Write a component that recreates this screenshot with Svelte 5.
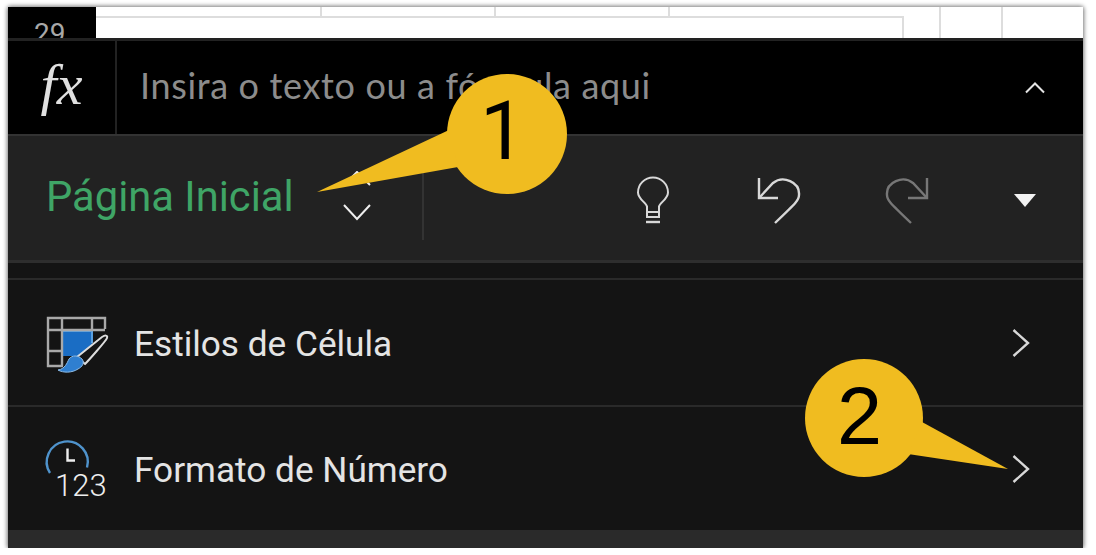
<script lang="ts">
	const topCols = [226, 174, 174];
	const rows = [
		{ label: "Estilos de Célula", icon: "styles" },
		{ label: "Formato de Número", icon: "number" }
	];
</script>

<div class="frame">
	<div class="sheet">
		<div class="row-head"><span>29</span></div>
		<div class="grid-main">
			<div class="grid-top">
				{#each topCols as w}
					<div class="cell" style="width: {w}px"></div>
				{/each}
			</div>
			<div class="grid-box"></div>
		</div>
		<div class="col col-a"></div>
		<div class="col col-b"></div>
	</div>

	<div class="formula">
		<div class="fx">fx</div>
		<div class="placeholder">Insira o texto ou a fórmula aqui</div>
		<svg class="collapse" width="22" height="13" viewBox="0 0 22 13">
			<path d="M2 11.5 11 2.5 20 11.5" fill="none" stroke="#e4e4e4" stroke-width="2" />
		</svg>
	</div>

	<div class="ribbon">
		<div class="tab">Página Inicial</div>
		<svg class="updown" width="28" height="50" viewBox="0 0 28 50">
			<path d="M1 14 14 1 27 14" fill="none" stroke="#eee" stroke-width="2" />
			<path d="M1 34 14 48 27 34" fill="none" stroke="#eee" stroke-width="2" />
		</svg>
		<div class="divider"></div>
		<svg class="bulb" width="34" height="48" viewBox="0 0 34 48">
			<path d="M11 41V30.5C10 26.5 2 23 2 16.5A15 15 0 0 1 32 16.5C32 23 24 26.5 23 30.5V41ZM11 36H23" fill="none" stroke="#d8d8d8" stroke-width="2" />
			<path d="M10 46H24" fill="none" stroke="#d8d8d8" stroke-width="2.4" />
		</svg>
		<svg class="undo" width="46" height="48" viewBox="0 0 46 48">
			<path d="M3 2V22H22" fill="none" stroke="#d8d8d8" stroke-width="2.4" />
			<path d="M3 22 17 7C27 -1 44 6 43 19C43 24 41 26 19 47" fill="none" stroke="#d8d8d8" stroke-width="2.4" />
		</svg>
		<svg class="redo" width="46" height="48" viewBox="0 0 46 48">
			<path d="M43 2V22H24" fill="none" stroke="#777" stroke-width="2.4" />
			<path d="M43 22 29 7C19 -1 2 6 3 19C3 24 5 26 27 47" fill="none" stroke="#777" stroke-width="2.4" />
		</svg>
		<svg class="caret" width="22" height="13" viewBox="0 0 22 13">
			<path d="M0 0H22L11 13Z" fill="#f2f2f2" />
		</svg>
	</div>

	<div class="strip"></div>

	{#each rows as row}
		<div class="row">
			{#if row.icon === "styles"}
				<svg class="row-icon" width="62" height="58" viewBox="0 0 62 58">
					<path d="M15 14H45V39H15Z" fill="#1a6dc4" />
					<path d="M15 39V14H45V26" fill="none" stroke="#5aa0e0" stroke-width="2" />
					<path d="M16 49H1V1H58V12M1 13H58M1 34H15M15 1V49M45 1V13" fill="none" stroke="#a9a9a9" stroke-width="2.4" />
					<path d="M30 40 55 20C58 18 61 18 60 21 59 24 41 44 38 47Z" fill="#141414" stroke="#ddd" stroke-width="2" />
					<path d="M11 53C18 52 20 46 22 42 25 38 31 38 35 42 38 46 35 50 31 52 25 56 16 56 11 53Z" fill="#2f7fd0" stroke="#8dbbe6" stroke-width="1" />
				</svg>
			{:else}
				<svg class="row-icon" width="62" height="58" viewBox="0 0 62 58">
					<path d="M3 30A20.5 20.5 0 1 1 40 24.5" fill="none" stroke="#4f93cc" stroke-width="2.4" />
					<path d="M20.5 5.5V17.5H28" fill="none" stroke="#eee" stroke-width="2.4" />
					<text class="digits" x="8" y="52.5">123</text>
				</svg>
			{/if}
			<span class="label">{row.label}</span>
			<svg class="arrow" width="18" height="28" viewBox="0 0 18 28">
				<path d="M1.5 1 16 14 1.5 27" fill="none" stroke="#d8d8d8" stroke-width="2.4" />
			</svg>
		</div>
	{/each}

	<div class="bottom"></div>

	<svg class="callouts" width="1096" height="555" viewBox="0 0 1096 555">
		<circle cx="507" cy="134" r="60" fill="#f0bc20" />
		<path d="M317 192 449 130 458 167Z" fill="#f0bc20" />
		<circle cx="864" cy="418" r="59" fill="#f0bc20" />
		<path d="M1008 469 922 422 908 454Z" fill="#f0bc20" />
	</svg>
	<div class="badge one">1</div>
	<div class="badge two">2</div>
</div>

<style>
	:global(body) {
		background: #fff;
	}

	* {
		box-sizing: border-box;
	}

	.frame {
		position: relative;
		width: 1075px;
		height: 541px;
		margin: 7px 0 0 8px;
		display: flex;
		flex-direction: column;
		background: #141414;
		box-shadow: 0 0 4px 1px #777;
		border-radius: 3px;
		font-family: Roboto, sans-serif;
	}

	.sheet {
		height: 31px;
		display: flex;
		background: #fff;
		overflow: hidden;
	}

	.row-head {
		width: 88px;
		background: #000;
		color: #a8a8a8;
		font-size: 28px;
		padding: 11px 0 0 26px;
	}

	.row-head span {
		display: block;
		line-height: 32px;
	}

	.grid-main {
		width: 808px;
	}

	.grid-top {
		height: 9px;
		display: flex;
	}

	.cell {
		border-right: 2px solid #ddd;
	}

	.grid-box {
		height: 22px;
		border-top: 2px solid #ddd;
		border-right: 2px solid #ddd;
	}

	.col {
		border-right: 2px solid #ddd;
	}

	.col-a {
		width: 37px;
	}

	.col-b {
		width: 62px;
	}

	.formula {
		height: 96px;
		display: flex;
		align-items: center;
		background: #000;
		border-top: 3px solid #222;
	}

	.fx {
		width: 109px;
		height: 100%;
		border-right: 2px solid #222;
		color: #e0e0e0;
		font-family: "Liberation Serif", serif;
		font-style: italic;
		font-size: 58px;
		line-height: 87px;
		text-align: center;
	}

	.placeholder {
		margin-left: 23px;
		padding-bottom: 6px;
		font-family: Lato, sans-serif;
		font-size: 36px;
		letter-spacing: 0.65px;
		color: #8c8c8c;
		flex: 1;
	}

	.collapse {
		margin-right: 37px;
	}

	.ribbon {
		height: 126px;
		display: flex;
		align-items: center;
		background: #222;
		border-top: 2px solid #333;
	}

	.tab {
		margin: -4px 0 0 38px;
		width: 297px;
		font-size: 41.7px;
		color: #3fa566;
	}

	.updown {
		margin-top: -4px;
	}

	.divider {
		width: 2px;
		height: 76px;
		margin: 8px 0 0 51px;
		background: #333;
	}

	.bulb {
		margin: 4px 0 0 212px;
	}

	.undo {
		margin: 4px 0 0 86px;
	}

	.redo {
		margin: 4px 0 0 82px;
	}

	.caret {
		margin: 4px 0 0 84px;
	}

	.strip {
		height: 20px;
		background: #141414;
		border-top: 3px solid #2e2e2e;
		border-bottom: 2px solid #2a2a2a;
	}

	.row {
		height: 125px;
		display: flex;
		align-items: center;
		padding-left: 39px;
		background: #141414;
	}

	.row + .row {
		border-top: 2px solid #2a2a2a;
	}

	.row-icon {
		flex: none;
		overflow: visible;
		margin-top: 6px;
	}

	.digits {
		font-family: Roboto, sans-serif;
		font-weight: 300;
		font-size: 31px;
		fill: #eee;
	}

	.label {
		margin: 3px 0 0 25px;
		flex: 1;
		font-size: 35.2px;
		color: #e4e4e4;
	}

	.arrow {
		margin-right: 53px;
	}

	.bottom {
		height: 18px;
		background: #2a2a2a;
	}

	.callouts {
		position: absolute;
		left: -8px;
		top: -7px;
		pointer-events: none;
	}

	.badge {
		position: absolute;
		font-family: "Liberation Sans", Arial, sans-serif;
		font-size: 81px;
		line-height: 81px;
		color: #000;
	}

	.one {
		left: 472px;
		top: 84px;
		font-family: Roboto, sans-serif;
	}

	.two {
		left: 829px;
		top: 369px;
	}
</style>
